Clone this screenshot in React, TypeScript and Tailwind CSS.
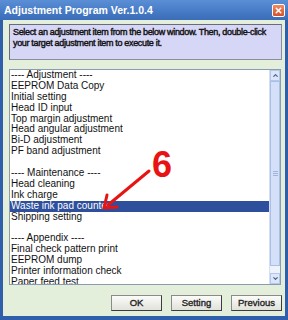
import { ChevronUp, ChevronDown, X } from 'lucide-react';

const items: string[] = [
  '---- Adjustment ----',
  'EEPROM Data Copy',
  'Initial setting',
  'Head ID input',
  'Top margin adjustment',
  'Head angular adjustment',
  'Bi-D adjustment',
  'PF band adjustment',
  '',
  '---- Maintenance ----',
  'Head cleaning',
  'Ink charge',
  'Waste ink pad counter',
  'Shipping setting',
  '',
  '---- Appendix ----',
  'Final check pattern print',
  'EEPROM dump',
  'Printer information check',
  'Paper feed test',
];

const selected = 'Waste ink pad counter';

const WinButton = ({ label }: { label: string }) => (
  <button
    type="button"
    className="w-[51px] h-[16px] bg-gradient-to-b from-[#fbfbf8] to-[#e2e2dc] border border-[#8a8a8a] border-r-[#3c3c3c] border-b-[#3c3c3c] text-[9.5px] text-[#222] leading-none [-webkit-text-stroke:0.35px_#222]"
  >
    {label}
  </button>
);

export default function App() {
  return (
    <div className="w-[288px] h-[320px] bg-[#2f5fab] flex flex-col font-['Liberation_Sans',Arial,sans-serif] overflow-hidden">
      {/* title bar */}
      <div className="h-[20px] flex items-center justify-between pl-[4px] pr-[3px] bg-gradient-to-b from-[#5a8fd6] to-[#3a6cb8]">
        <span className="text-white text-[10.5px] font-bold leading-none">Adjustment Program Ver.1.0.4</span>
        <div className="w-[13px] h-[13px] rounded-[2px] border border-white bg-gradient-to-b from-[#f08a5e] to-[#d4502c] flex items-center justify-center">
          <X className="w-[9px] h-[9px] text-white" strokeWidth={4} />
        </div>
      </div>

      {/* body */}
      <div className="flex-1 mx-[3px] mb-[4px] bg-[#e3eedb] flex flex-col relative">
        <div className="mt-[4px] ml-[6px] mr-[3px] h-[36px] bg-[#d6d6f6] border border-[#8c8c9c] border-t-[#6a6a7a] border-l-[#6a6a7a] pl-[3px] pt-[2px] text-[9px] tracking-[-0.33px] leading-[11px] text-[#111] whitespace-nowrap [-webkit-text-stroke:0.4px_#111]">
          Select an adjustment item from the below window. Then, double-click
          <br />
          your target adjustment item to execute it.
        </div>

        {/* list box */}
        <div className="mt-[9px] ml-[6px] mr-[4px] h-[216px] bg-white border border-[#8c9cb0] flex overflow-hidden">
          <div className="flex-1 overflow-hidden">
            {items.map((item, i) => (
              <div
                key={i}
                className={`h-[10.9px] leading-[10.9px] text-[10px] pl-[1px] whitespace-nowrap ${
                  item === selected ? 'bg-[#2d4f9c] text-white' : 'text-[#111]'
                }`}
              >
                {item}
              </div>
            ))}
          </div>
          {/* scrollbar */}
          <div className="w-[11px] bg-[#eef2fb] border-l border-[#d6def0] flex flex-col">
            <div className="h-[11px] bg-[#dbe6fa] border border-[#b4c6ea] flex items-center justify-center">
              <ChevronUp className="w-[7px] h-[7px] text-[#4d6185]" strokeWidth={4} />
            </div>
            <div className="h-[185px] bg-[#d3e0f8] border border-[#aabfe8] flex items-center justify-center">
              <div className="flex flex-col gap-[1px]">
                <div className="w-[5px] h-px bg-[#9fb3dc]" />
                <div className="w-[5px] h-px bg-[#9fb3dc]" />
                <div className="w-[5px] h-px bg-[#9fb3dc]" />
              </div>
            </div>
            <div className="flex-1" />
            <div className="h-[11px] bg-[#dbe6fa] border border-[#b4c6ea] flex items-center justify-center">
              <ChevronDown className="w-[7px] h-[7px] text-[#4d6185]" strokeWidth={4} />
            </div>
          </div>
        </div>

        {/* buttons */}
        <div className="mt-[10px] flex justify-end gap-[9px] mr-[3px]">
          <WinButton label="OK" />
          <WinButton label="Setting" />
          <WinButton label="Previous" />
        </div>

        {/* annotation overlay */}
        <span className="absolute left-[149px] top-[127px] text-[36px] font-bold leading-none text-[#e81414]">6</span>
        <svg className="absolute left-0 top-0" width="282" height="296" viewBox="0 0 282 296">
          <line x1="146" y1="151" x2="105" y2="185" stroke="#e81414" strokeWidth="3" strokeLinecap="round" />
          <path d="M101 188 L104 175 M101 188 L114 187" stroke="#e81414" strokeWidth="3" strokeLinecap="round" strokeLinejoin="round" fill="none" />
        </svg>
      </div>
    </div>
  );
}
